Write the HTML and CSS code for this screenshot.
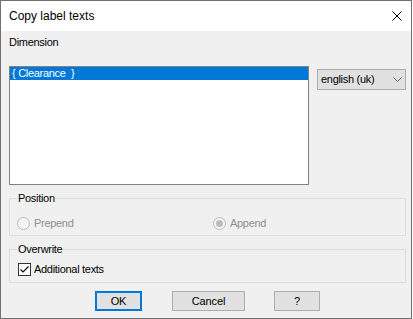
FILE: index.html
```html
<!DOCTYPE html>
<html lang="en">
<head>
  <meta charset="UTF-8" />
  <title>Copy label texts</title>
  <link rel="stylesheet" href="styles.css">
</head>
<body>
  <div class="dialog">
    <div class="titlebar">
      <span class="title">Copy label texts</span>
      <svg class="close" width="10" height="10" viewBox="0 0 10 10">
        <path d="M0.5 0.5 L9.5 9.5 M9.5 0.5 L0.5 9.5" stroke="#000" stroke-width="1" fill="none" />
      </svg>
    </div>

    <div class="content">
      <div class="label">Dimension</div>

      <div class="dimension-row">
        <div class="listbox">
          <div class="list-item selected">{ Clearance  }</div>
        </div>
        <div class="combo">
          <span>english (uk)</span>
          <svg class="chevron" width="9" height="5" viewBox="0 0 9 5">
            <path d="M0.5 0.5 L4.5 4.5 L8.5 0.5" stroke="#606060" stroke-width="1" fill="none" />
          </svg>
        </div>
      </div>

      <fieldset class="group group-position">
        <legend>Position</legend>
        <div class="radio-row">
          <label class="radio disabled"><span class="radio-circle"></span>Prepend</label>
          <label class="radio disabled checked"><span class="radio-circle"></span>Append</label>
        </div>
      </fieldset>

      <fieldset class="group group-overwrite">
        <legend>Overwrite</legend>
        <label class="check">
          <span class="check-box">
            <svg width="11" height="11" viewBox="0 0 11 11">
              <path d="M1.5 5.5 L4 8 L9.5 2.5" stroke="#000" stroke-width="1.1" fill="none" />
            </svg>
          </span>
          Additional texts
        </label>
      </fieldset>

      <div class="buttons">
        <button class="btn btn-default">OK</button>
        <button class="btn btn-cancel">Cancel</button>
        <button class="btn btn-help">?</button>
      </div>
    </div>
  </div>
</body>
</html>
```

FILE: styles.css
```css
body {
  margin: 0;
  background: #ffffff;
  font-family: "Liberation Sans", Arial, sans-serif;
}

.dialog {
  width: 412px;
  height: 319px;
  box-sizing: border-box;
  border: 1px solid #707070;
  display: flex;
  flex-direction: column;
}

.titlebar {
  height: 30px;
  flex: none;
  display: flex;
  align-items: center;
  padding-left: 8px;
  background: #ffffff;
}

.title {
  font-size: 12px;
  line-height: 16px;
  color: #000;
}

.close {
  margin-left: auto;
  margin-right: 9px;
}

.content {
  flex: 1;
  background: #f0f0f0;
  padding: 5px 5px 0 8px;
  font-size: 11px;
  line-height: 13px;
  letter-spacing: -0.3px;
  color: #000;
}

.dimension-row {
  display: flex;
  align-items: flex-start;
  margin-top: 17px;
}

.listbox {
  width: 300px;
  height: 119px;
  box-sizing: border-box;
  border: 1px solid #828282;
  background: #fff;
}

.list-item {
  height: 13px;
  padding-left: 2px;
  white-space: pre;
}

.list-item.selected {
  background: #0078d7;
  color: #fff;
}

.combo {
  width: 89px;
  height: 21px;
  box-sizing: border-box;
  margin: 3px 0 0 8px;
  border: 1px solid #adadad;
  background: #e1e1e1;
  display: flex;
  align-items: center;
  justify-content: space-between;
  padding: 0 3px 0 3px;
}

.group {
  margin: 7px 0 0 0;
  border: 1px solid #dcdcdc;
  padding: 12px 7px 5px 7px;
  min-inline-size: 0;
}

.group legend {
  padding: 0 1px;
  line-height: 13px;
}

.group-overwrite {
  padding-top: 7px;
  padding-bottom: 6px;
}

.radio-row {
  display: grid;
  grid-template-columns: 196px auto;
}

.radio {
  display: flex;
  align-items: center;
  gap: 4px;
  height: 13px;
}

.radio.disabled {
  color: #8f8f8f;
}

.radio-circle {
  width: 13px;
  height: 13px;
  box-sizing: border-box;
  border: 1px solid #bcbcbc;
  border-radius: 50%;
  background: #f4f4f4;
  display: flex;
  align-items: center;
  justify-content: center;
}

.radio.checked .radio-circle::after {
  content: "";
  width: 7px;
  height: 7px;
  border-radius: 50%;
  background: #bcbcbc;
}

.check {
  display: flex;
  align-items: center;
  gap: 3px;
  height: 13px;
  padding-left: 1px;
}

.check-box {
  width: 13px;
  height: 13px;
  box-sizing: border-box;
  border: 1px solid #333;
  background: #fff;
  display: flex;
}

.buttons {
  display: flex;
  margin-top: 8px;
  padding-left: 86px;
}

.btn {
  height: 20px;
  box-sizing: border-box;
  border: 1px solid #adadad;
  background: #e1e1e1;
  font-family: inherit;
  font-size: 11px;
  letter-spacing: -0.1px;
  color: #000;
  padding: 0;
}

.btn-default {
  width: 47px;
  border: 2px solid #0078d7;
}

.btn-cancel {
  width: 73px;
  margin-left: 30px;
}

.btn-help {
  width: 46px;
  margin-left: 29px;
}
```
